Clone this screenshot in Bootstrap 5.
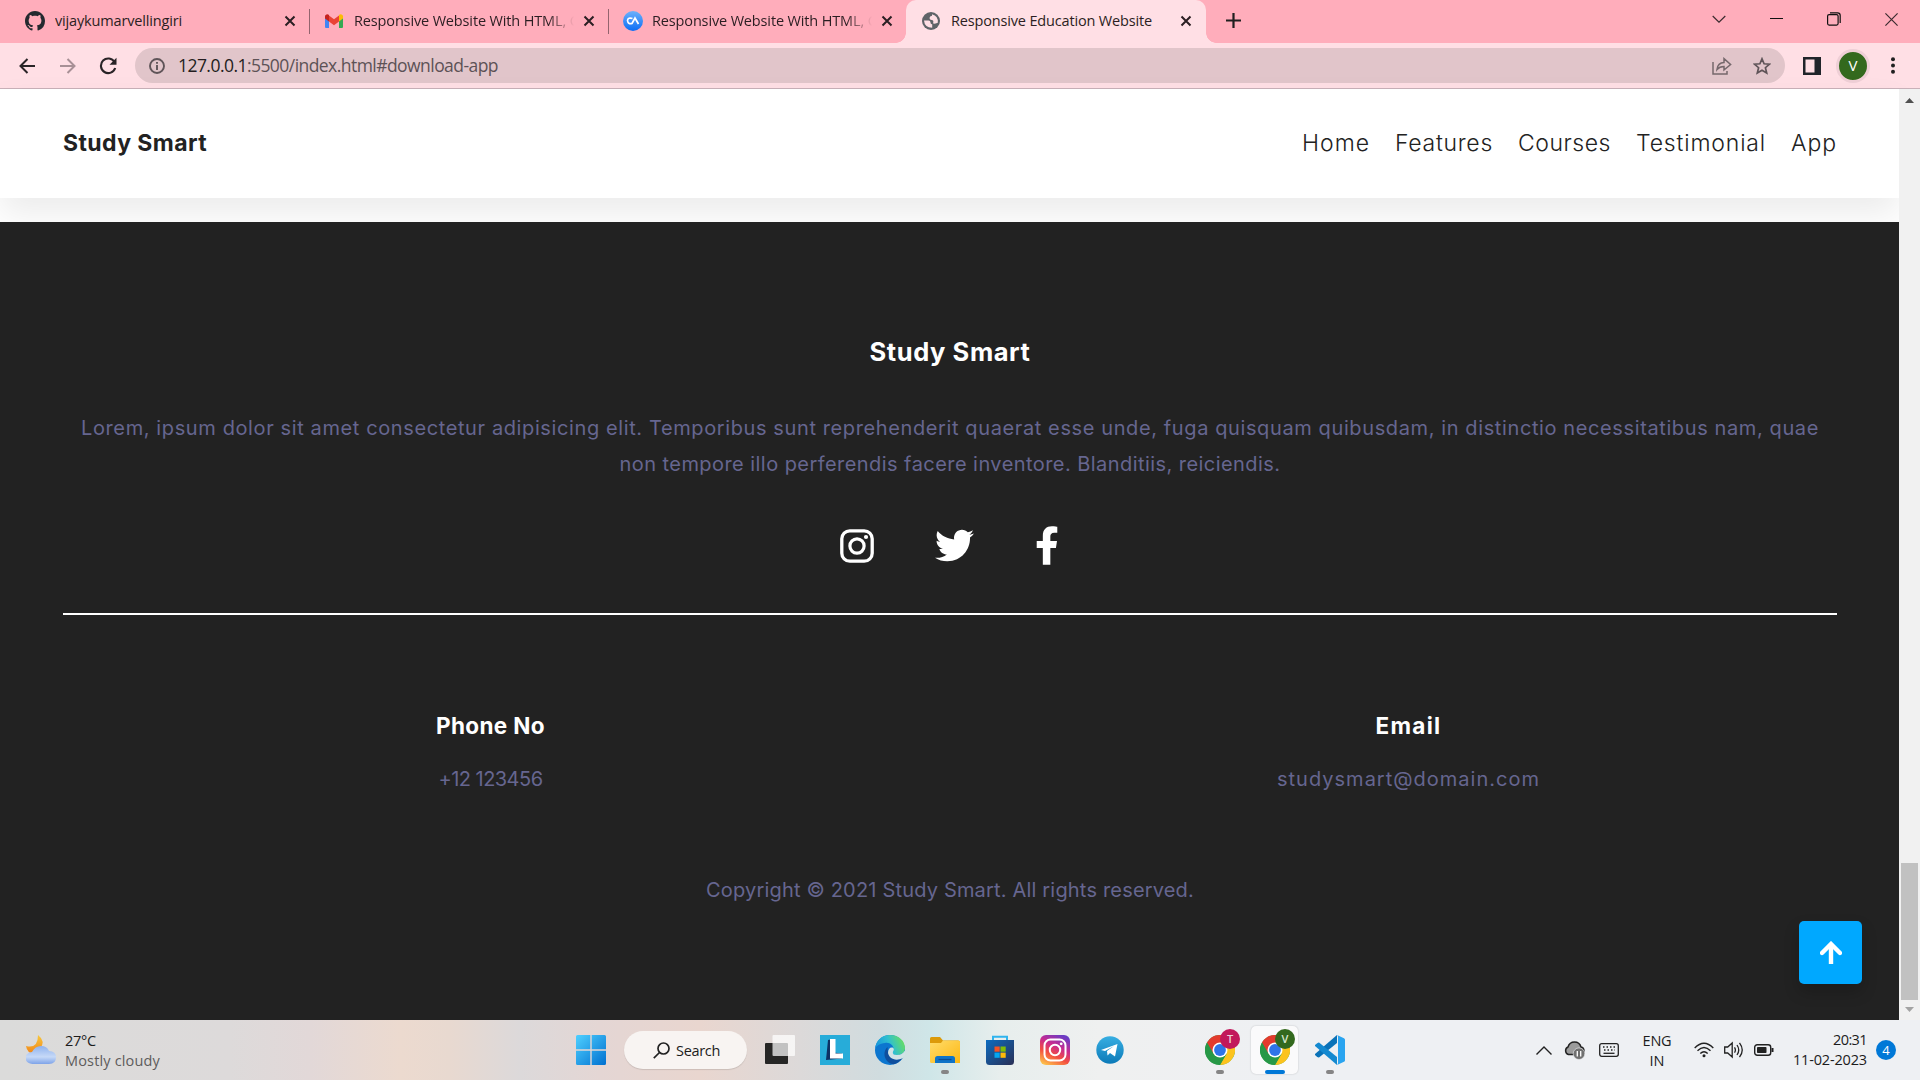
<!DOCTYPE html>
<html lang="en">
<head>
<meta charset="utf-8">
<title>Responsive Education Website</title>
<link href="https://cdn.jsdelivr.net/npm/bootstrap@5.3.0/dist/css/bootstrap.min.css" rel="stylesheet">
<style>
  body{width:1920px;height:1080px;overflow:hidden;font-family:"Open Sans","Noto Sans",sans-serif;background:#fff}
  svg{display:block;flex:none}
  [data-w]{white-space:nowrap}
  /* browser tabs */
  .tabstrip{height:43px;background:#ffadbb;color:#2b1e22;font-size:14.5px}
  .tab-item{height:43px;flex:none;padding-bottom:2px}
  .tab-item .title{white-space:nowrap;overflow:hidden;flex:none}
  .fade-out{-webkit-mask-image:linear-gradient(to right,#000 88%,transparent 100%);mask-image:linear-gradient(to right,#000 88%,transparent 100%)}
  .sep{width:1px;height:25px;background:#93646e;flex:none;margin-top:9px}
  .tab-live{background:#ffdfe5;border-radius:10px 10px 0 0;position:relative}
  .tab-live::before,.tab-live::after{content:"";position:absolute;bottom:0;width:10px;height:10px}
  .tab-live::before{left:-10px;background:radial-gradient(circle at 0 0,transparent 9.5px,#ffdfe5 10px)}
  .tab-live::after{right:-10px;background:radial-gradient(circle at 100% 0,transparent 9.5px,#ffdfe5 10px)}
  /* address bar */
  .toolbar{height:46px;background:#ffdfe5;border-bottom:1px solid #c9b1b9}
  .omnibox{width:1650px;height:35px;border-radius:18px;background:#e1c5ca;font-size:17.500px;color:#5d5256}
  .omnibox b{font-weight:400;color:#231d20}
  .avatar{width:34px;height:34px;border-radius:50%;background:#33691e;border:3px solid #efcfd6;color:#fff;font-size:15px}
  /* page */
  .viewport{height:931px}
  .page{width:1899px;font-family:Inter,"Open Sans",sans-serif}
  .site-head{height:109px;padding:0 62px 0 63px;box-shadow:0 16px 32px rgba(0,0,0,.08);color:#222;z-index:1}
  .brand{font-size:23px;font-weight:700}
  .site-nav{font-size:23px;font-weight:350}
  .strip{height:24px}
  .site-foot{height:798px;background:#222;color:#666690;font-size:20px;font-weight:400;padding:0 62px 0 63px;z-index:2}
  .site-foot h3,.site-foot h4{color:#fff;font-weight:700;line-height:30px;margin:0}
  .site-foot h3{font-size:25.500px}
  .site-foot h4{font-size:22.500px}
  .site-foot p{line-height:36px;margin:0;white-space:nowrap}
  .rule{height:2px;background:#fff}
  .to-top{position:absolute;left:1799px;top:699px;width:63px;height:63px;border-radius:5px;background:#00a8ff;box-shadow:0 8px 16px rgba(0,0,0,.2)}
  .scroller{width:21px;background:#f1f1f1;z-index:3}
  .thumb{width:17px;height:137px;background:#c1c1c1}
  /* taskbar */
  .taskbar{height:60px;color:#1c1c1c;font-size:14.5px;line-height:20px;background:linear-gradient(to right,#dbdbda 0,#dddada 230px,#e2d8d8 310px,#ecdacf 400px,#e8d9d0 450px,#dcd9da 520px,#e4d6d4 600px,#e9d6cf 700px,#dcd9d9 800px,#d0dcdf 880px,#cfe6e8 930px,#e7eeed 1000px,#eff0f0 1100px,#eef0f3 1300px,#eef0f3 100%)}
  .searchbox{width:123px;height:38px;border-radius:19px;background:#f8f4f2;box-shadow:0 1px 1px rgba(0,0,0,.12)}
  .slot{width:55px;height:60px;position:relative}
  .slot.on::before{content:"";position:absolute;left:4px;top:6px;width:47px;height:48px;border-radius:5px;background:#fafafb;box-shadow:0 0 2px rgba(0,0,0,.2)}
  .slot svg{position:relative}
  .run::after{content:"";position:absolute;left:24px;top:50px;width:8px;height:4px;border-radius:2px;background:#858585}
  .slot.on::after{left:18px;width:20px;background:#0078d7}
  .who{position:absolute;left:28px;top:9px;width:20px;height:20px;border-radius:50%;font-size:11px;font-weight:600;color:#ecd3dc;background:#c2185b}
  .who-v{background:#33691e;color:#d9e8d0}
  .count{width:20px;height:20px;border-radius:50%;background:#0078d7;color:#fff;font-size:13px}
</style>
</head>
<body>
<svg width="0" height="0" class="position-absolute">
  <defs>
    <linearGradient id="gWin" x2="1" y2="1"><stop stop-color="#4fd0ff"/><stop offset="1" stop-color="#0070d0"/></linearGradient>
    <linearGradient id="gIg" x1=".2" y1="1" x2=".7" y2="0"><stop stop-color="#fdc04a"/><stop offset=".35" stop-color="#f3503f"/><stop offset=".65" stop-color="#c82a90"/><stop offset="1" stop-color="#6a3cc4"/></linearGradient>
    <linearGradient id="gTg" x2="0" y2="1"><stop stop-color="#37aee2"/><stop offset="1" stop-color="#0c7ab8"/></linearGradient>
    <linearGradient id="gCloud" x2="0" y2="1"><stop stop-color="#8fb2ee"/><stop offset=".6" stop-color="#c6d9f7"/><stop offset="1" stop-color="#7ea3e8"/></linearGradient>
    <linearGradient id="gMoon" x2="0" y2="1"><stop stop-color="#f8c83c"/><stop offset="1" stop-color="#f08419"/></linearGradient>
    <linearGradient id="gEdge" x1="0" y1=".6" x2="1" y2=".3"><stop stop-color="#1590dd"/><stop offset=".5" stop-color="#2fbfd0"/><stop offset="1" stop-color="#6be05a"/></linearGradient>
    <linearGradient id="gFold" x2="1" y2="1"><stop stop-color="#ffdc6b"/><stop offset="1" stop-color="#fdb813"/></linearGradient>
    <linearGradient id="gStore" x2="1" y2="1"><stop stop-color="#0c6cc0"/><stop offset="1" stop-color="#2a2f55"/></linearGradient>
    <linearGradient id="gCa" x2="0" y2="1"><stop stop-color="#6db1fb"/><stop offset="1" stop-color="#0a6df5"/></linearGradient>
    <symbol id="cross" viewBox="0 0 12 12"><path d="M1.500 1.500l9 9M10.500 1.500l-9 9" stroke="#2b1e22" stroke-width="2" fill="none"/></symbol>
    <symbol id="insta" viewBox="0 0 34 34"><rect x="1.800" y="1.800" width="30.400" height="30.400" rx="8" fill="none" stroke="#fff" stroke-width="3.300"/><circle cx="17" cy="17" r="7.100" fill="none" stroke="#fff" stroke-width="3.200"/><circle cx="26" cy="8" r="2.100" fill="#fff"/></symbol>
    <symbol id="chrome" viewBox="0 0 30 30"><circle cx="15" cy="15" r="15" fill="#34a853"/><path d="M2 7.500A15 15 0 0 1 28 7.500H15L8.500 18.750z" fill="#e33b2e"/><path d="M28 7.500A15 15 0 0 1 15 30L21.500 18.750 15 7.500z" fill="#fcc31e"/><path d="M2 7.500L8.500 18.750l3 2.500L15 8z" fill="#e33b2e"/><path d="M2 7.500A15 15 0 0 0 15 30l6.500-11.250H8.500z" fill="#279847"/><circle cx="15" cy="15" r="7.500" fill="#fff"/><circle cx="15" cy="15" r="5.900" fill="#2f74e8"/></symbol>
  </defs>
</svg>

<div class="tabstrip d-flex align-items-start">
  <div class="tab-item d-flex align-items-center" style="width:309px;padding-left:25px">
    <svg width="20" height="20" viewBox="0 0 16 16" fill="#24292f"><path d="M8 0C3.580 0 0 3.580 0 8c0 3.540 2.290 6.530 5.470 7.590.4.070.55-.17.55-.38 0-.19-.01-.82-.01-1.490-2.010.37-2.530-.49-2.690-.94-.09-.23-.48-.94-.82-1.130-.28-.15-.68-.52-.01-.53.63-.01 1.080.58 1.230.82.72 1.210 1.870.87 2.330.66.070-.52.28-.87.51-1.070-1.780-.2-3.640-.89-3.640-3.950 0-.87.31-1.590.82-2.150-.08-.2-.36-1.020.08-2.120 0 0 .67-.21 2.200.82.64-.18 1.320-.27 2-.27s1.360.09 2 .27c1.530-1.040 2.200-.82 2.200-.82.44 1.100.16 1.920.08 2.120.51.56.82 1.270.82 2.150 0 3.070-1.870 3.750-3.650 3.950.29.25.54.73.54 1.480 0 1.070-.01 1.930-.01 2.200 0 .21.15.46.55.38A8.010 8.010 0 0 0 16 8c0-4.420-3.580-8-8-8z"/></svg>
    <span class="title" style="margin-left:10px;width:229px"><span data-w="127">vijaykumarvellingiri</span></span>
    <svg width="12" height="12"><use href="#cross"/></svg>
  </div>
  <div class="sep"></div>
  <div class="tab-item d-flex align-items-center" style="width:298px;padding-left:15px">
    <svg width="18" height="14" viewBox="0 0 18 14"><path d="M0 2v11q0 1 1 1h3V5z" fill="#4285f4"/><path d="M18 2v11q0 1-1 1h-3V5z" fill="#34a853"/><path d="M4 1.500l5 3.800 5-3.800V7.500l-5 3.800-5-3.800z" fill="#ea4335"/><path d="M0 2.500C0 .3 2.500-.6 4 .9V7.500L0 4.500z" fill="#c5221f"/><path d="M18 2.500C18 .3 15.500-.6 14 .9V7.500l4-3z" fill="#fbbc04"/></svg>
    <span class="title fade-out" style="margin-left:11px;width:220px"><span data-w="212">Responsive Website With HTML,</span> C</span>
    <svg width="12" height="12" style="margin-left:9px"><use href="#cross"/></svg>
  </div>
  <div class="sep"></div>
  <div class="tab-item d-flex align-items-center" style="width:297px;padding-left:14px">
    <svg width="20" height="20" viewBox="0 0 20 20"><circle cx="10" cy="10" r="10" fill="url(#gCa)"/><path d="M9.500 7.500Q5 6 4.500 9.500 5 13.500 9 12.500L12 7l3.500 6" fill="none" stroke="#fff" stroke-width="1.700"/></svg>
    <span class="title fade-out" style="margin-left:9px;width:220px"><span data-w="212">Responsive Website With HTML,</span> C</span>
    <svg width="12" height="12" style="margin-left:9px"><use href="#cross"/></svg>
  </div>
  <div class="tab-item tab-live d-flex align-items-center" style="width:300px;padding-left:16px">
    <svg width="18" height="18" viewBox="0 0 18 18"><circle cx="9" cy="9" r="9" fill="#5f6368"/><path d="M2 8.500h4.500q2 0 2 2t1.700 1.800v3.400Q2.500 15.500 2 8.500zM10 2.200v1.600Q7.500 4 7.500 6t2.200 2 1.500 2.500 4.600.2Q16.500 4 10 2.200z" fill="#ffdfe5"/></svg>
    <span class="title" style="margin-left:11px;width:229px"><span data-w="201">Responsive Education Website</span></span>
    <svg width="12" height="12"><use href="#cross"/></svg>
  </div>
  <div class="d-flex align-items-center flex-grow-1 tab-item" style="padding-left:20px">
    <svg width="15" height="15" viewBox="0 0 15 15" stroke="#1f1f1f" stroke-width="2.200"><path d="M7.500 0v15M0 7.500h15"/></svg>
  </div>
  <div class="d-flex align-items-center" style="height:38px;padding-right:22px">
    <svg width="14" height="8" viewBox="0 0 14 8" fill="none" stroke="#3c2b2f" stroke-width="1.200"><path d="M.7 1L7 7.200 13.300 1"/></svg>
    <svg width="13" height="2" viewBox="0 0 13 2" style="margin-left:44px"><path d="M0 .5h13" stroke="#111" stroke-width="1"/></svg>
    <svg width="14" height="14" viewBox="0 0 14 14" fill="none" stroke="#111" stroke-width="1.200" style="margin-left:44px"><rect x=".6" y="2.600" width="10.500" height="10.500" rx="1.500"/><path d="M3 .8h7.500a2.700 2.700 0 0 1 2.700 2.700V11"/></svg>
    <svg width="13" height="13" viewBox="0 0 13 13" style="margin-left:44px"><path d="M.4.4l12.200 12.200M12.600.4L.4 12.600" stroke="#3c2b2f" stroke-width="1.200"/></svg>
  </div>
</div>

<div class="toolbar d-flex align-items-center">
  <svg width="16" height="16" viewBox="0 0 16 16" fill="none" stroke="#2a2427" stroke-width="2" style="margin-left:19px"><path d="M16 8H1.500M8.500 1L1.500 8l7 7"/></svg>
  <svg width="16" height="16" viewBox="0 0 16 16" fill="none" stroke="#a89096" stroke-width="2" style="margin-left:25px"><path d="M0 8h14.500M7.500 1l7 7-7 7"/></svg>
  <svg width="18" height="18" viewBox="0 0 18 18" fill="none" stroke="#2a2427" stroke-width="2.100" style="margin-left:23px"><path d="M15.500 5A7.300 7.300 0 1 0 16.200 11"/><path d="M17.500.8v7h-7z" fill="#2a2427" stroke="none"/></svg>
  <div class="omnibox d-flex align-items-center" style="margin-left:18px;padding:0 14px 0 14px">
    <svg width="16" height="16" viewBox="0 0 16 16" fill="none" stroke="#5f5458" stroke-width="1.900"><circle cx="8" cy="8" r="7"/><path d="M8 7v5M8 3.900v1.900"/></svg>
    <span style="margin-left:13px" data-w="320"><b>127.0.0.1</b>:5500/index.html#download-app</span>
    <svg width="20" height="18" viewBox="0 0 20 18" fill="none" stroke="#75686c" stroke-width="1.500" class="ms-auto"><path d="M1 5v12h14v-3"/><path d="M5 12.500C5.500 8 8 5.600 12 5.500V1.600L18.600 7.500 12 13V9.500Q7.500 9.500 5 12.500z"/></svg>
    <svg width="18" height="18" viewBox="0 0 18 18" fill="none" stroke="#5f5458" stroke-width="1.700" style="margin-left:21px"><path d="M9 1.800l2.100 5 5.400.4-4.100 3.500 1.300 5.300L9 13.200 4.300 16l1.300-5.300L1.500 7.200l5.400-.4z"/></svg>
  </div>
  <svg width="18" height="18" viewBox="0 0 18 18" style="margin-left:18px"><path d="M0 0h18v18H0zM2.500 2.500v13h9v-13z" fill="#20242a" fill-rule="evenodd"/></svg>
  <div class="avatar d-flex align-items-center justify-content-center" style="margin-left:15px">V</div>
  <svg width="4" height="17" viewBox="0 0 4 17" fill="#202020" style="margin-left:21px"><circle cx="2" cy="2.200" r="2"/><circle cx="2" cy="8.500" r="2"/><circle cx="2" cy="14.800" r="2"/></svg>
</div>

<main class="viewport d-flex">
  <div class="page">
    <header class="site-head bg-white d-flex align-items-center justify-content-between position-relative">
      <div class="brand" data-w="144">Study Smart</div>
      <nav class="site-nav d-flex" style="gap:25px">
        <span data-w="68">Home</span><span data-w="98">Features</span><span data-w="93">Courses</span><span data-w="130">Testimonial</span><span data-w="46">App</span>
      </nav>
    </header>
    <div class="strip"></div>
    <footer class="site-foot text-center position-relative">
      <h3 style="padding-top:115px"><span data-w="161">Study Smart</span></h3>
      <div style="padding-top:43px">
        <p><span data-w="1738">Lorem, ipsum dolor sit amet consectetur adipisicing elit. Temporibus sunt reprehenderit quaerat esse unde, fuga quisquam quibusdam, in distinctio necessitatibus nam, quae</span></p>
        <p><span data-w="661">non tempore illo perferendis facere inventore. Blanditiis, reiciendis.</span></p>
      </div>
      <div class="d-flex justify-content-center align-items-center" style="height:39px;margin-top:44px;padding-right:2px">
        <svg width="34" height="34"><use href="#insta"/></svg>
        <svg width="39" height="39" viewBox="0 0 512 512" fill="#fff" style="margin-left:61px"><path d="M459.370 151.716c.325 4.548.325 9.097.325 13.645 0 138.720-105.583 298.558-298.558 298.558-59.452 0-114.680-17.219-161.137-47.106 8.447.974 16.568 1.299 25.340 1.299 49.055 0 94.213-16.568 130.274-44.832-46.132-.975-84.792-31.188-98.112-72.772 6.498.974 12.995 1.624 19.818 1.624 9.421 0 18.843-1.300 27.614-3.573-48.081-9.747-84.143-51.980-84.143-102.985v-1.299c13.969 7.797 30.214 12.670 47.431 13.319-28.264-18.843-46.781-51.005-46.781-87.391 0-19.492 5.197-37.360 14.294-52.954 51.655 63.675 129.300 105.258 216.365 109.807-1.624-7.797-2.599-15.918-2.599-24.040 0-57.828 46.782-104.934 104.934-104.934 30.213 0 57.502 12.670 76.670 33.137 23.715-4.548 46.456-13.320 66.599-25.340-7.798 24.366-24.366 44.833-46.132 57.827 21.117-2.273 41.584-8.122 60.426-16.243-14.292 20.791-32.161 39.308-52.628 54.253z"/></svg>
        <svg width="24" height="39" viewBox="0 0 320 512" fill="#fff" style="margin-left:61px"><path d="M279.140 288l14.220-92.660h-88.910v-60.130c0-25.350 12.420-50.060 52.240-50.060h40.420V6.260S260.430 0 225.360 0c-73.220 0-121.080 44.380-121.080 124.720v70.620H22.890V288h81.390v224h100.170V288z"/></svg>
      </div>
      <div class="rule" style="margin-top:48px"></div>
      <div class="d-flex" style="padding-top:96px">
        <div style="width:855px"><h4><span data-w="109">Phone No</span></h4><p style="padding-top:20px"><span data-w="104">+12 123456</span></p></div>
        <div class="ms-auto" style="width:857px"><h4><span data-w="66">Email</span></h4><p style="padding-top:20px"><span data-w="263">studysmart@domain.com</span></p></div>
      </div>
      <p style="padding-top:75px"><span data-w="488">Copyright © 2021 Study Smart. All rights reserved.</span></p>
      <a class="to-top d-flex align-items-center justify-content-center"><svg width="22" height="23" viewBox="0 0 22 23" fill="none" stroke="#fff" stroke-width="4.400"><path d="M11 23V3" /><path d="M2 12l9-9 9 9" stroke-linecap="round"/></svg></a>
    </footer>
  </div>
  <div class="scroller d-flex flex-column align-items-center justify-content-between position-relative" style="padding:9px 0 8px">
    <svg width="9" height="5" viewBox="0 0 9 5"><path d="M0 5L4.500 0 9 5z" fill="#505050"/></svg>
    <div class="d-flex flex-column align-items-center"><div class="thumb"></div>
    <svg width="9" height="5" viewBox="0 0 9 5" style="margin-top:7px"><path d="M0 0h9L4.500 5z" fill="#a3a3a3"/></svg></div>
  </div>
</main>

<footer class="taskbar d-flex align-items-center">
  <svg width="30" height="30" viewBox="0 0 30 30" style="margin-left:26px"><path d="M12 0q8 6 2 14L8 19Q1 18 0 11q12 3 12-11z" fill="url(#gMoon)"/><path d="M7 29a7 6 0 0 1-1-12q3-6 9-6 6 0 8 5 7 0 7 6.500Q30 29 23 29z" fill="url(#gCloud)"/></svg>
  <div style="margin-left:9px;width:511px;padding-top:1px"><div><span data-w="31">27°C</span></div><div style="color:#5e5c5c"><span data-w="95">Mostly cloudy</span></div></div>
  <svg width="30" height="30" viewBox="0 0 30 30" fill="url(#gWin)"><path d="M1.500 0H14.300V14.300H0V1.500Q0 0 1.500 0zM15.700 0H28.500Q30 0 30 1.500V14.300H15.700zM0 15.700H14.300V30H1.500Q0 30 0 28.500zM15.700 15.700H30V28.500Q30 30 28.500 30H15.700z"/></svg>
  <div class="searchbox d-flex align-items-center" style="margin-left:18px;padding-left:29px">
    <svg width="17" height="17" viewBox="0 0 17 17" fill="none" stroke="#222" stroke-width="1.700"><circle cx="10.500" cy="6.500" r="5.500"/><path d="M6.500 10.500L.8 16.200"/></svg>
    <span style="margin-left:6px;padding-top:1px" data-w="44">Search</span>
  </div>
  <div class="d-flex" style="margin-left:5px">
    <div class="slot d-flex align-items-center justify-content-center"><svg width="30" height="30" viewBox="0 0 30 30"><rect y="8" width="23" height="21" rx="1" fill="#262625"/><rect x="7.500" y="0" width="22.500" height="21" rx="1" fill="#fff" fill-opacity=".72"/></svg></div>
    <div class="slot d-flex align-items-center justify-content-center"><svg width="30" height="30" viewBox="0 0 30 30"><path d="M0 0h30v30H0z" fill="#27acd9"/><path d="M8 5L6 25l16-1.500v-5l-9-1V4z" fill="#0d3264"/><path d="M10 4h5.500v14.500H23v5H10z" fill="#fff"/></svg></div>
    <div class="slot d-flex align-items-center justify-content-center"><svg width="30" height="30" viewBox="0 0 30 30"><circle cx="15" cy="15" r="15" fill="#0c76cf"/><path d="M0 14C1 5 7 0 15 0c9 0 15 6 15 13 0 5-4 7-8 7-4 0-5-1.500-4-3.500C20 12 16 7 10 8 5 8.500 1 11 0 14z" fill="url(#gEdge)"/><path d="M12.500 12C7 17 9 28 19 29.300q5.500-1.800 8.600-6.300C20 26.500 12.500 22 12.500 12z" fill="#0f4f9e"/><path d="M13 18c0-4 2-6 4.500-5.500Q20 14 18 16.500 17 20 22 20q5 0 8-4.500v5l-2 2.500c-8 4-14 0-15-5z" fill="#d2e3e6"/></svg></div>
    <div class="slot run d-flex align-items-center justify-content-center"><svg width="30" height="30" viewBox="0 0 30 30"><path d="M0 12V3.500Q0 2 1.500 2H10l3 3.500h15Q30 5.500 30 7v5z" fill="#dc9a0a"/><path d="M0 8h11l2-2.500h15.500Q30 5.500 30 7v21H1.500Q0 28 0 26.500z" fill="url(#gFold)"/><path d="M5 28v-4.500Q5 21 7.500 21h15q2.500 0 2.500 2.500V28z" fill="#0f74c8"/><path d="M8.500 24.500h13" stroke="#0a4d93" stroke-width="1.200"/></svg></div>
    <div class="slot d-flex align-items-center justify-content-center"><svg width="30" height="30" viewBox="0 0 30 30"><path d="M8 6V1.800h14V6" fill="none" stroke="#2fb4ee" stroke-width="2"/><path d="M1 5h28v21.500q0 3.500-3.500 3.500h-21Q1 30 1 26.500z" fill="url(#gStore)"/><path d="M9.500 11.500h5.200v5.200H9.500z" fill="#f35325"/><path d="M15.500 11.500h5.200v5.200h-5.200z" fill="#81bc06"/><path d="M9.500 17.600h5.200v5.200H9.500z" fill="#05a6f0"/><path d="M15.500 17.600h5.200v5.200h-5.200z" fill="#ffba08"/></svg></div>
    <div class="slot d-flex align-items-center justify-content-center"><svg width="30" height="30" viewBox="0 0 30 30"><rect width="30" height="30" rx="6" fill="url(#gIg)"/><rect x="4.500" y="4.500" width="21" height="21" rx="6" fill="none" stroke="#fff" stroke-width="2"/><circle cx="15" cy="15" r="5.200" fill="none" stroke="#fff" stroke-width="2"/><circle cx="21.200" cy="8.800" r="1.400" fill="#fff"/></svg></div>
    <div class="slot d-flex align-items-center justify-content-center"><svg width="28" height="28" viewBox="0 0 28 28"><circle cx="14" cy="14" r="13.700" fill="url(#gTg)"/><path d="M5 14L21.500 8 19 20.500l-5-3.500-2.500 2.500-.5-4.500 7-5-9 5z" fill="#fff"/></svg></div>
    <div class="slot"></div>
    <div class="slot run d-flex align-items-center justify-content-center"><svg width="30" height="30"><use href="#chrome"/></svg><span class="who d-flex align-items-center justify-content-center">T</span></div>
    <div class="slot run on d-flex align-items-center justify-content-center"><svg width="30" height="30"><use href="#chrome"/></svg><span class="who who-v d-flex align-items-center justify-content-center">V</span></div>
    <div class="slot run d-flex align-items-center justify-content-center"><svg width="30" height="30" viewBox="0 0 30 30"><path d="M22 0v8L4 22.500Q3 23 0 20v-1z" fill="#0a72b8"/><path d="M22 30v-8L4 7.500Q3 7 0 10v1z" fill="#1489d0"/><path d="M22 0l7 3.200q1 .5 1 1.500v20.600q0 1-1 1.500L22 30q1-1 1-2V2q0-1-1-2z" fill="#29a4f0"/></svg></div>
  </div>
  <div class="d-flex align-items-center ms-auto" style="padding-right:24px">
    <svg width="16" height="9" viewBox="0 0 16 9" fill="none" stroke="#222" stroke-width="1.400"><path d="M.5 8.500L8 1l7.500 7.500"/></svg>
    <svg width="21" height="19" viewBox="0 0 21 19" style="margin-left:12px"><path d="M4.500 13.500a4 4 0 0 1-.5-7.500Q5.500 1 10.500 1T17 6q3 .5 3 4t-3 3.500z" fill="#9b9b9b" stroke="#222" stroke-width="1.500"/><circle cx="15" cy="12.700" r="5.800" fill="#707070" stroke="#eef0f3" stroke-width=".6"/><path d="M13.300 10v5.400M16.700 10v5.400" stroke="#fff" stroke-width="1.300"/></svg>
    <svg width="20" height="14" viewBox="0 0 20 14" fill="none" stroke="#222" stroke-width="1.300" style="margin-left:14px"><rect x=".7" y=".7" width="18.600" height="12.600" rx="2"/><path d="M4 4h12.500M5 7h11" stroke-dasharray="1.500 2"/><path d="M4.500 10.300h11"/></svg>
    <div class="text-center" style="width:40px;margin-left:18px;padding-top:1px"><div><span data-w="29">ENG</span></div><div><span data-w="15">IN</span></div></div>
    <svg width="20" height="16" viewBox="0 0 20 16" fill="none" stroke="#222" stroke-width="1.400" style="margin-left:17px"><path d="M.7 6Q10-3.500 19.300 6M3.500 8.800q6.500-6.500 13 0M6.300 11.500q3.700-3.600 7.400 0"/><circle cx="10" cy="13.800" r="1.500" fill="#222" stroke="none"/></svg>
    <svg width="20" height="18" viewBox="0 0 20 18" fill="none" stroke="#222" stroke-width="1.300" style="margin-left:10px"><path d="M.7 6v6h3l4.500 4V2L3.700 6zM10.500 6.300q1.800 2.700 0 5.400M13 4q3.500 5 0 10M15.500 1.800q5.500 7.200 0 14.400"/></svg>
    <svg width="20" height="12" viewBox="0 0 20 12" fill="none" stroke="#222" stroke-width="1.400" style="margin-left:10px"><rect x=".7" y=".7" width="16" height="10.600" rx="2.500"/><rect x="3" y="3" width="9.500" height="6" rx=".8" fill="#222" stroke="none"/><path d="M18.500 4v4" stroke-width="2"/></svg>
    <div class="text-end" style="width:80px;margin-left:13px"><div><span data-w="34">20:31</span></div><div><span data-w="74">11-02-2023</span></div></div>
    <div class="count d-flex align-items-center justify-content-center" style="margin-left:9px">4</div>
  </div>
</footer>
<script src="https://cdn.jsdelivr.net/npm/bootstrap@5.3.0/dist/js/bootstrap.bundle.min.js"></script>
<script>
  // Track each label so that it fills the line width given in data-w.
  const fits = [...document.querySelectorAll('[data-w]')].map(el =>
    [el, (el.dataset.w - el.getBoundingClientRect().width) / el.textContent.length]);
  fits.forEach(([el, gap]) => { el.style.letterSpacing = gap.toFixed(3) + 'px'; });
</script>
</body>
</html>
